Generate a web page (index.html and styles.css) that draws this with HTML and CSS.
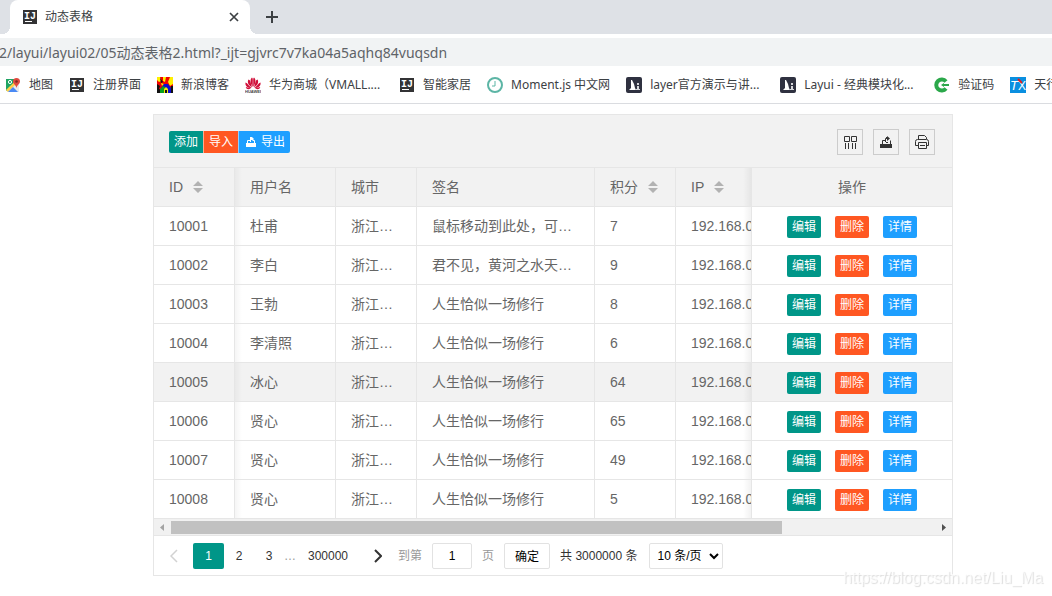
FILE: index.html
```html
<!DOCTYPE html>
<html lang="zh">
    <head>
        <meta charset="utf-8">
        <title>动态表格</title>
        <link rel="stylesheet" href="styles.css">
    </head>
    <body>
        <!-- shared icons -->
        <svg class="defs" aria-hidden="true">
            <symbol id="ij" viewBox="0 0 16 16">
                <rect x="1" y="1" width="14" height="14" fill="#333335"/>
                <text x="2" y="10" font-family="Liberation Mono" font-weight="bold" font-size="10" fill="#fff">I</text>
                <text x="8" y="10" font-family="Liberation Mono" font-weight="bold" font-size="10" fill="#fff">J</text>
                <rect x="3" y="12" width="7" height="1" fill="#fff"/>
            </symbol>
            <symbol id="layui" viewBox="0 0 16 16">
                <rect width="16" height="16" rx="2" fill="#2f3140"/>
                <path d="M3 13 L5 11 V3 H6 L8 7 L9 11 L10 13 Z" fill="#fff"/>
                <path d="M11 6h2v2h-2z M11 9h2v3h1v1h-4v-1h1z" fill="#d5d6da"/>
            </symbol>
            <symbol id="sort" viewBox="0 0 10 12">
                <path d="M5 0 L10 5 H0 Z M0 7 H10 L5 12 Z" fill="#b2b2b2"/>
            </symbol>
        </svg>

        <div class="tabs">
            <div class="tab">
                <svg class="icon"><use href="#ij"/></svg>
                <span class="tab-title">动态表格</span>
                <button type="button" class="tab-btn" aria-label="关闭">
                    <svg width="10" height="10" viewBox="0 0 10 10"><path d="M1 1L9 9M9 1L1 9" stroke="#3c4043" stroke-width="1.7"/></svg>
                </button>
            </div>
            <button type="button" class="tab-btn new" aria-label="新标签页">
                <svg width="12" height="12" viewBox="0 0 12 12"><path d="M6 0V12M0 6H12" stroke="#3c4043" stroke-width="2"/></svg>
            </button>
        </div>
        <div class="address">
            <input type="text" class="url" aria-label="地址" value="42/layui/layui02/05动态表格2.html?_ijt=gjvrc7v7ka04a5aqhq84vuqsdn">
        </div>
        <div class="bookmarks">
            <a href="#">
                <svg class="icon" viewBox="0 0 16 16">
                    <path d="M2 2H14V15H2Z" fill="#e8eaed"/>
                    <path d="M1 2H10L8 8L1 14Z" fill="#1fa463"/>
                    <path d="M1 13L11 3L13 5L3 15Z" fill="#ffd04b"/>
                    <path d="M1 2H9L8 6L1 12Z" fill="#1fa463"/>
                    <path d="M3 15L8 10L13 15Z" fill="#4a8af4"/>
                    <circle cx="5" cy="5" r="1.6" fill="none" stroke="#fff" stroke-width="1"/>
                    <path d="M11.500 1A3.500 3.500 0 0 1 15 4.500C15 7 12 8 11.500 11C11 8 8 7 8 4.500A3.500 3.500 0 0 1 11.500 1Z" fill="#e04a3f"/>
                    <circle cx="11.500" cy="4.500" r="1.300" fill="#7c2a24"/>
                </svg>
                <span>地图</span>
            </a>
            <a href="#"><svg class="icon"><use href="#ij"/></svg><span>注册界面</span></a>
            <a href="#">
                <svg class="icon" viewBox="0 0 16 16">
                    <rect width="16" height="16" fill="#f00000"/>
                    <path d="M0 0H3L4 4L2 5L0 3Z M6 0H9L8 5L6 4Z M13 0H16V7L13 9L11 5Z M4 6L7 7L5 9Z" fill="#ffef00"/>
                    <path d="M0 7L3 9L2 12L5 13V16H0Z M3 1L6 5L4 6Z M14 9H16V16H13Z" fill="#111"/>
                    <path d="M4 16V11L7 7H11L14 11V16Z" fill="#0b0bd0"/>
                    <path d="M3 16V12L6 9L8 10L7 16Z" fill="#08a020"/>
                    <path d="M7 16V12L9 10L11 12V16Z" fill="#f8e800"/>
                    <path d="M8 16V13H10V16Z" fill="#111"/>
                </svg>
                <span>新浪博客</span>
            </a>
            <a href="#" class="long">
                <svg class="icon" viewBox="0 0 16 16">
                    <g fill="#d0103a">
                        <path d="M7.700 10C5 6 5 2 7 0.500Q8 1 7.800 3Z M8.300 10C11 6 11 2 9 0.500Q8 1 8.200 3Z"/>
                        <path d="M7 10.500C3 8 2 5 3.500 2.500Q5 2.500 5.500 5Z M9 10.500C13 8 14 5 12.500 2.500Q11 2.500 10.500 5Z"/>
                        <path d="M6.500 11C2 11 0 8.500 0.500 5.500Q2 5.500 3.500 8Z M9.500 11C14 11 16 8.500 15.500 5.500Q14 5.500 12.500 8Z"/>
                        <path d="M6 11.500C3 13 1 12 0.800 10Z M10 11.500C13 13 15 12 15.200 10Z"/>
                    </g>
                    <text x="0" y="16" font-family="Liberation Sans" font-weight="bold" font-size="4" fill="#444">HUAWEI</text>
                </svg>
                <span>华为商城（VMALL....</span>
            </a>
            <a href="#"><svg class="icon"><use href="#ij"/></svg><span>智能家居</span></a>
            <a href="#">
                <svg class="icon" viewBox="0 0 16 16">
                    <circle cx="8" cy="8" r="7" fill="#fff" stroke="#5cb5a5" stroke-width="2"/>
                    <path d="M8 4V9H5" fill="none" stroke="#5cb5a5" stroke-width="1"/>
                </svg>
                <span>Moment.js 中文网</span>
            </a>
            <a href="#" class="long"><svg class="icon"><use href="#layui"/></svg><span>layer官方演示与讲...</span></a>
            <a href="#" class="long"><svg class="icon"><use href="#layui"/></svg><span>Layui - 经典模块化...</span></a>
            <a href="#">
                <svg class="icon" viewBox="0 0 16 16">
                    <path d="M12 4.500A5.500 5.500 0 1 0 12 11.500" fill="none" stroke="#2ba84a" stroke-width="4"/>
                    <path d="M7 8L10 6V7H15V9H10V10Z" fill="#2ba84a"/>
                </svg>
                <span>验证码</span>
            </a>
            <a href="#">
                <svg class="icon" viewBox="0 0 16 16">
                    <rect width="16" height="16" fill="#0a8fe0"/>
                    <text x="0" y="13" font-family="Liberation Sans" font-style="italic" font-size="13" fill="#fff">T</text>
                    <text x="8" y="13" font-family="Liberation Sans" font-size="12" fill="#fff">X</text>
                    <path d="M8 2L12 6" stroke="#e02020" stroke-width="2"/>
                </svg>
                <span>天行</span>
            </a>
        </div>

        <div class="table-view">
            <div class="tool">
                <div class="btn-group">
                    <button type="button" class="btn">添加</button>
                    <button type="button" class="btn danger">导入</button>
                    <button type="button" class="btn normal">
                        <svg width="12" height="12" viewBox="0 0 12 12"><path d="M1 7H11V11H1Z" fill="#fff"/><path d="M2.500 8V4.500H5M8 4.500H9.500V8M5.500 6V3" fill="none" stroke="#fff"/><path d="M5 1H7L9 3L7 5V4H5Z" fill="#fff"/></svg>
                        导出
                    </button>
                </div>
                <div class="tool-self">
                    <button type="button" aria-label="筛选列">
                        <svg width="14" height="14" viewBox="0 0 14 14"><path d="M1.500 1.500H6.500V6.500H1.500ZM8.500 1.500H13.500V6.500H8.500ZM2.500 8V14M5.500 8V14M9.500 8V14M12.500 8V14" fill="none" stroke="#333"/></svg>
                    </button>
                    <button type="button" aria-label="导出">
                        <svg width="14" height="14" viewBox="0 0 14 14"><path d="M1 9H13V13H1Z" fill="#333"/><path d="M3.500 9V5.500H6M11.500 5.500V9M7 7.500H9M6.500 7V3.500H8" fill="none" stroke="#333"/><path d="M7 2H8V1L11 3.500L8 6V4H7Z" fill="#333"/></svg>
                    </button>
                    <button type="button" aria-label="打印">
                        <svg width="16" height="16" viewBox="0 0 16 16"><path d="M4.500 5V1.500H10.500L12.500 3.500V5M4 11.500H1.500V7.500Q1.500 5.500 3.500 5.500H12.500Q14.500 5.500 14.500 7.500V11.500H12M4.500 8.500H12.500V14.500H4.500ZM6 11.500H11" fill="none" stroke="#333"/></svg>
                    </button>
                </div>
            </div>
            <table>
                <colgroup>
                    <col class="w80"><col class="w100"><col class="w80"><col><col class="w80"><col class="w76"><col class="w200">
                </colgroup>
                <thead>
                    <tr>
                        <th>ID<svg class="sort"><use href="#sort"/></svg></th>
                        <th class="shade-l">用户名</th>
                        <th>城市</th>
                        <th>签名</th>
                        <th>积分<svg class="sort"><use href="#sort"/></svg></th>
                        <th class="shade-r">IP<svg class="sort"><use href="#sort"/></svg></th>
                        <th class="action">操作</th>
                    </tr>
                </thead>
                <tbody id="rows"></tbody>
            </table>
            <div class="scroll">
                <svg width="17" height="17" viewBox="0 0 17 17"><path d="M10 5V12L6 8.500Z" fill="#a3a3a3"/></svg>
                <div class="track"><div class="thumb"></div></div>
                <svg width="17" height="17" viewBox="0 0 17 17"><path d="M7 5V12L11 8.500Z" fill="#505050"/></svg>
            </div>
            <div class="page">
                <a href="#" class="arrow" aria-label="上一页"><svg width="8" height="14" viewBox="0 0 8 14"><path d="M7 1L1 7L7 13" fill="none" stroke="#d2d2d2" stroke-width="1.500"/></svg></a>
                <a href="#" class="num curr">1</a>
                <a href="#" class="num">2</a>
                <a href="#" class="num">3</a>
                <span class="dots">…</span>
                <a href="#" class="last">300000</a>
                <a href="#" class="arrow next" aria-label="下一页"><svg width="8" height="14" viewBox="0 0 8 14"><path d="M1 1L7 7L1 13" fill="none" stroke="#333" stroke-width="2"/></svg></a>
                <label class="skip">到第<input type="text" value="1">页</label>
                <button type="button" class="ok">确定</button>
                <span class="count">共 3000000 条</span>
                <select aria-label="每页条数">
                    <option>10 条/页</option>
                    <option>20 条/页</option>
                </select>
            </div>
        </div>
        <div class="mark">https://blog.csdn.net/Liu_Ma</div>
        <script>
            var data = [
                [10001, "杜甫", "鼠标移动到此处，可查看", 7],
                [10002, "李白", "君不见，黄河之水天上来", 9],
                [10003, "王勃", "人生恰似一场修行", 8],
                [10004, "李清照", "人生恰似一场修行", 6],
                [10005, "冰心", "人生恰似一场修行", 64],
                [10006, "贤心", "人生恰似一场修行", 65],
                [10007, "贤心", "人生恰似一场修行", 49],
                [10008, "贤心", "人生恰似一场修行", 5]
            ];
            var html = "";
            for(var i = 0; i < data.length; i++){
                var d = data[i];
                html += "<tr" + (d[0] == 10005 ? " class='hover'" : "") + ">"
                    + "<td>" + d[0] + "</td>"
                    + "<td class='shade-l'>" + d[1] + "</td>"
                    + "<td><div class='cut'>浙江杭州</div></td>"
                    + "<td><div class='cut'>" + d[2] + "</div></td>"
                    + "<td>" + d[3] + "</td>"
                    + "<td class='shade-r'>192.168.0.8</td>"
                    + "<td class='action'><div class='ops'>"
                    + "<button type='button' class='btn'>编辑</button>"
                    + "<button type='button' class='btn danger'>删除</button>"
                    + "<button type='button' class='btn normal'>详情</button>"
                    + "</div></td></tr>";
            }
            document.getElementById("rows").innerHTML = html;
        </script>
    </body>
</html>
```
FILE: styles.css
```css
*{
    box-sizing: border-box;
}
body{
    margin: 0;
    background: #fff;
    color: #666;
    font: 14px/24px "Liberation Sans", "Noto Sans CJK SC", sans-serif;
    overflow: hidden;
}
a{
    color: #333;
    text-decoration: none;
}
button, input, select{
    font-family: inherit;
    font-size: 12px;
    margin: 0;
    padding: 0;
}
svg{
    display: block;
    flex-shrink: 0;
}
.defs{
    display: none;
}
.icon{
    width: 16px;
    height: 16px;
}

/* browser bar */
.tabs, .address, .bookmarks{
    font-family: "Noto Sans", "Noto Sans CJK SC", sans-serif;
}
.tabs{
    display: flex;
    align-items: center;
    height: 34px;
    padding-left: 10px;
    background: #dee1e6;
}
.tab{
    position: relative;
    display: flex;
    align-items: center;
    width: 240px;
    height: 34px;
    padding: 0 11px 0 12px;
    background: #fff;
    border-radius: 8px 8px 0 0;
    font-size: 12px;
    color: #3c4043;
}
/* curved feet of the active tab */
.tab::before, .tab::after{
    content: "";
    position: absolute;
    bottom: 0;
    width: 8px;
    height: 8px;
}
.tab::before{
    right: 100%;
    background: radial-gradient(circle at 0 0, #dee1e6 8px, #fff 8px);
}
.tab::after{
    left: 100%;
    background: radial-gradient(circle at 100% 0, #dee1e6 8px, #fff 8px);
}
.tab-title{
    flex: 1;
    padding-left: 7px;
}
.tab-btn{
    display: flex;
    border: 0;
    background: none;
}
.tab-btn.new{
    padding-left: 16px;
}
.address{
    padding-top: 4px;
}
.url{
    display: block;
    width: 100%;
    height: 28px;
    border: 0;
    background: #f1f3f4;
    color: #5f6368;
    font-size: 14px;
    text-indent: -9px;
}
.bookmarks{
    display: flex;
    align-items: center;
    gap: 16px;
    height: 38px;
    padding-left: 5px;
    border-bottom: 1px solid #dadce0;
    font-size: 12px;
    overflow: hidden;
}
.bookmarks a{
    display: flex;
    flex-shrink: 0;
    align-items: center;
    gap: 8px;
    white-space: nowrap;
    color: #3c4043;
}
.bookmarks .long{
    width: 138px;
}

/* table */
.table-view{
    margin: 10px 99px 0 153px;
    border: 1px solid #e6e6e6;
}
.tool{
    display: flex;
    justify-content: space-between;
    align-items: center;
    height: 53px;
    padding: 2px 17px 0 15px;
    background: #f2f2f2;
    border-bottom: 1px solid #e6e6e6;
}
.btn{
    display: flex;
    align-items: center;
    gap: 4px;
    height: 22px;
    padding: 0 5px;
    border: 0;
    border-radius: 2px;
    background: #009688;
    color: #fff;
    line-height: 22px;
}
.danger{
    background: #ff5722;
}
.normal{
    background: #1e9fff;
}
.btn-group{
    display: flex;
}
.btn-group .btn{
    border-radius: 0;
}
.btn-group .btn:first-child{
    border-radius: 2px 0 0 2px;
}
.btn-group .btn:last-child{
    border-radius: 0 2px 2px 0;
}
.btn-group .btn + .btn{
    border-left: 1px solid rgba(255,255,255,.5);
}
.btn-group .normal{
    padding: 0 5px 0 6px;
}
.tool-self{
    display: flex;
    gap: 10px;
}
.tool-self button{
    display: flex;
    align-items: center;
    justify-content: center;
    width: 26px;
    height: 26px;
    border: 1px solid #ccc;
    background: none;
}
table{
    width: 100%;
    table-layout: fixed;
    border-collapse: separate;
    border-spacing: 0;
}
.w80{
    width: 81px;
}
.w100{
    width: 101px;
}
.w76{
    width: 76px;
}
.w200{
    width: 200px;
}
th, td{
    height: 39px;
    padding: 0 15px;
    border-right: 1px solid #e6e6e6;
    border-bottom: 1px solid #e6e6e6;
    text-align: left;
    font-weight: normal;
    line-height: 28px;
    white-space: nowrap;
    overflow: hidden;
}
thead th, .hover td{
    background-color: #f2f2f2;
}
.sort{
    display: inline-block;
    width: 10px;
    height: 12px;
    margin-left: 10px;
    vertical-align: -1px;
}
.cut{
    overflow: hidden;
    text-overflow: ellipsis;
}
.shade-l{
    background-image: linear-gradient(to right, rgba(0,0,0,.04), transparent 7px);
}
.shade-r{
    padding-right: 0;
    background-image: linear-gradient(to left, rgba(0,0,0,.05), transparent 8px);
}
.action{
    padding: 0;
    border-right: 0;
    text-align: center;
}
.ops{
    display: flex;
    justify-content: center;
    gap: 14px;
    padding-top: 2px;
}
.scroll{
    display: flex;
    height: 17px;
    background: #f1f1f1;
    border-bottom: 1px solid #e6e6e6;
}
.track{
    flex: 1;
    padding: 2px 0 1px;
}
.thumb{
    width: 80%;
    height: 13px;
    background: #c1c1c1;
}

/* paging */
.page{
    display: flex;
    align-items: center;
    height: 39px;
    padding-left: 16px;
    font-size: 12px;
    line-height: 26px;
    color: #333;
    white-space: nowrap;
}
.arrow{
    padding-right: 15px;
}
.arrow.next{
    padding: 0 16px 0 26px;
}
.num{
    width: 30px;
    text-align: center;
}
.curr{
    width: 31px;
    border-radius: 2px;
    background: #009688;
    color: #fff;
}
.dots{
    padding-right: 12px;
    color: #999;
}
.skip{
    color: #999;
}
.skip input{
    width: 40px;
    height: 26px;
    margin: 0 10px;
    border: 1px solid #e2e2e2;
    border-radius: 2px;
    text-align: center;
}
.ok{
    width: 46px;
    height: 26px;
    margin: 0 10px;
    border: 1px solid #e2e2e2;
    border-radius: 2px;
    background: #fff;
}
.page select{
    width: 74px;
    height: 26px;
    margin-left: 12px;
    padding-left: 3px;
    border: 1px solid #e2e2e2;
    border-radius: 2px;
    background: #fff;
}
.mark{
    position: fixed;
    right: 9px;
    bottom: 6px;
    font-size: 16px;
    color: rgba(255,255,255,.7);
    text-shadow: 1px 1px 1px #ddd;
}
```
